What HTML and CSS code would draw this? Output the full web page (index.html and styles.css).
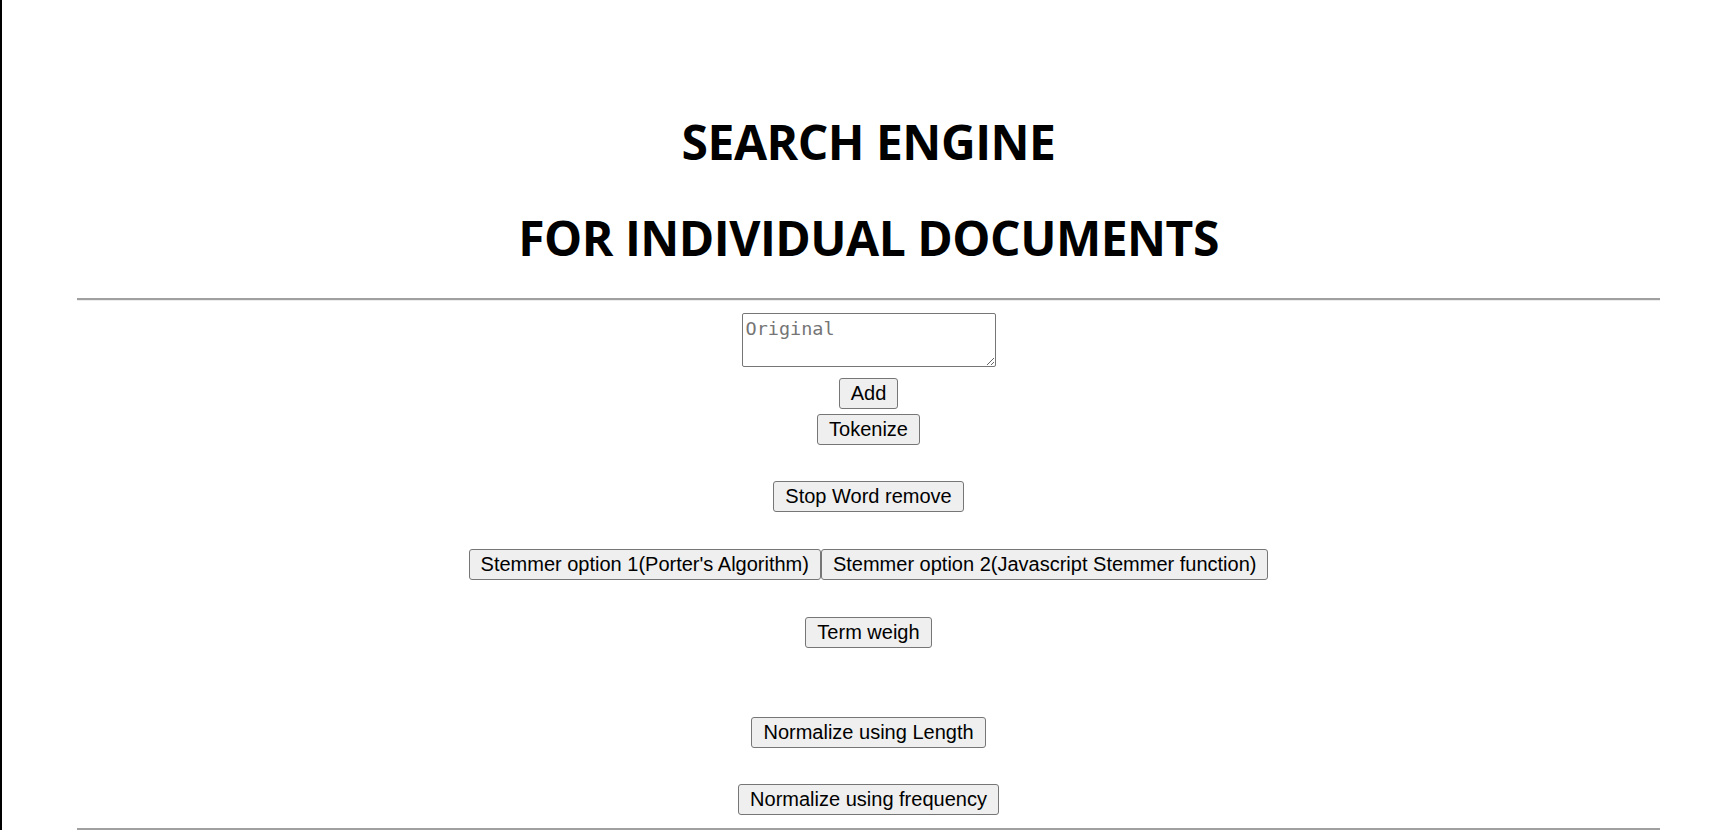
FILE: index.html
```html
<!DOCTYPE html>
<html lang="en">
<head>
<meta charset="utf-8">
<title>Search Engine</title>
<link rel="stylesheet" href="styles.css">
</head>
<body>
<div class="page">
  <header class="masthead">
    <h1 class="title">SEARCH ENGINE</h1>
    <h1 class="title">FOR INDIVIDUAL DOCUMENTS</h1>
  </header>
  <hr class="rule">
  <main class="controls">
    <textarea class="doc-input" placeholder="Original"></textarea>
    <div class="row gap-add"><button class="btn" type="button">Add</button></div>
    <div class="row gap-tight"><button class="btn" type="button">Tokenize</button></div>
    <div class="row gap-sep"><button class="btn" type="button">Stop Word remove</button></div>
    <div class="row gap-sep2"><button class="btn" type="button">Stemmer option 1(Porter's Algorithm)</button><button class="btn" type="button">Stemmer option 2(Javascript Stemmer function)</button></div>
    <div class="row gap-sep3"><button class="btn" type="button">Term weigh</button></div>
    <div class="row gap-wide"><button class="btn" type="button">Normalize using Length</button></div>
    <div class="row gap-sep"><button class="btn" type="button">Normalize using frequency</button></div>
  </main>
  <hr class="rule rule-bottom">
</div>
</body>
</html>
```

FILE: styles.css
```css
html, body {
  margin: 0;
  padding: 0;
  background: #ffffff;
}

body {
  border-left: 2px solid #000000;
  min-height: 100vh;
  box-sizing: border-box;
  font-family: "Liberation Sans", Arial, sans-serif;
  color: #000000;
}

.page {
  display: flex;
  flex-direction: column;
}

.masthead {
  display: flex;
  flex-direction: column;
  align-items: center;
  gap: 32px;
  padding-top: 110px;
  margin-bottom: 28px;
}

.title {
  margin: 0;
  font-family: "Open Sans", "Noto Sans", sans-serif;
  font-weight: 700;
  font-size: 48px;
  line-height: 64px;
  letter-spacing: -0.5px;
  text-align: center;
}

.rule {
  margin: 0 75px;
  height: 0;
  border: 0;
  border-top: 2px solid #a0a0a0;
  border-bottom: 1px solid #ececec;
}

.controls {
  display: flex;
  flex-direction: column;
  align-items: center;
  padding-top: 12px;
  padding-bottom: 13px;
}

.doc-input {
  width: 254px;
  height: 54px;
  box-sizing: border-box;
  margin: 0;
  padding: 4px 3px;
  border: 1px solid #767676;
  border-radius: 2px;
  font-family: "DejaVu Sans Mono", "Liberation Mono", monospace;
  font-size: 18.5px;
  line-height: 21px;
  color: #000;
  background: #fff;
}

.doc-input::placeholder {
  color: #757575;
}

.row {
  display: flex;
  justify-content: center;
}

.gap-add { margin-top: 11px; }
.gap-tight { margin-top: 5px; }
.gap-sep { margin-top: 36px; }
.gap-sep2 { margin-top: 37px; }
.gap-sep3 { margin-top: 37px; }
.gap-wide { margin-top: 69px; }

.btn {
  margin: 0;
  height: 31px;
  padding: 0 11px;
  border: 1px solid #767676;
  border-radius: 3px;
  background: #efefef;
  color: #000000;
  font-family: "Liberation Sans", Arial, sans-serif;
  font-size: 20px;
  line-height: 23px;
}
```
